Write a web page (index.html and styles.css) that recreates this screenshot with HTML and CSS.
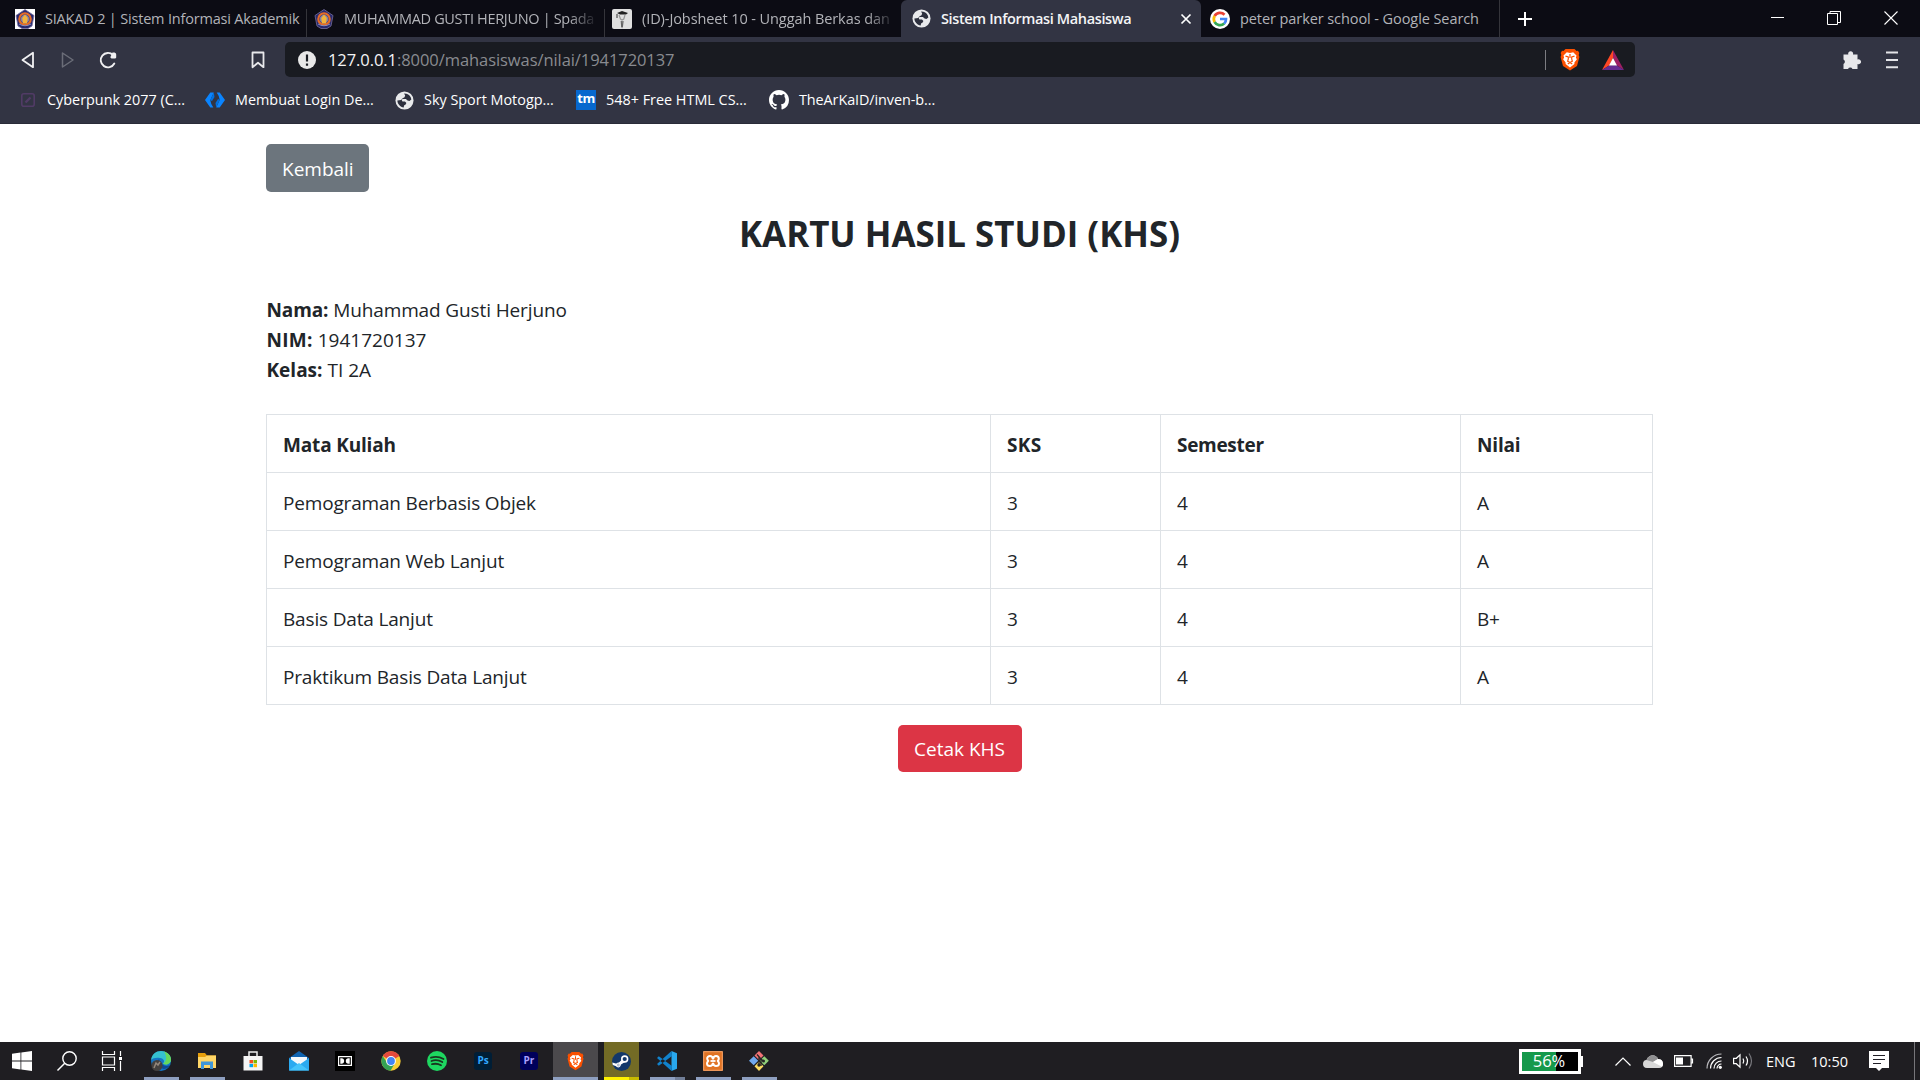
FILE: index.html
```html
<!DOCTYPE html>
<html lang="id">
<head>
<meta charset="utf-8">
<title>Sistem Informasi Mahasiswa</title>
<link rel="stylesheet" href="styles.css">
</head>
<body>
<svg class="defs" width="0" height="0" aria-hidden="true">
  <symbol id="globe" viewBox="0 0 20 20"><circle cx="10" cy="10" r="9.500" fill="#e9eaec"/><path d="M9.500 2.500 12 3c2.700.500 5 3 5.200 6l-2 1.500-2-.5-1.700-1.700-3.500.2C7 9 7 10.600 8 11h2.500l1.500 1.500-.8 1.800-1.700 1-.3 2C5.500 17 2.500 13.500 2.500 10l4-.5 1.500-2 2-.8.7-2z" fill="#2d303e"/></symbol>
  <symbol id="lion" viewBox="0 0 20 23"><path d="M5.500 1h9l2 2 1.500-.2 1.300 2.300-.6 2 .7 1.900-2.400 9L10 22.500 3 18 .6 9l.7-1.900-.6-2L2 2.800l1.500.2z" fill="#fb5000"/><path d="m10 5 3.200-.7 3.300 3.200-.6 2.200 1 1.600-2.500 3.200 0 1.500L10 19.500 5.600 16v-1.500L3.100 11.300l1-1.600-.6-2.200 3.300-3.200z" fill="#fff"/><path d="M5.500 8.200 8.300 9v2l-.6 2.200L10 14.500l2.300-1.300-.6-2.200V9l2.800-.8M10 6v4M7.800 16 10 14.500l2.200 1.500" fill="none" stroke="#fb5000" stroke-width="1.200"/></symbol>
  <symbol id="crest" viewBox="0 0 20 20"><path d="M10 .5 19 6.500 17 17l-4 2.500H7L3 17 1 6.500z" fill="#27296f" stroke="#776f9b" stroke-width=".8"/><circle cx="10" cy="10" r="5.700" fill="none" stroke="#e66b27" stroke-width="2.200"/><circle cx="10" cy="10" r="4.300" fill="#7f80a8"/><path d="M10 5.500 12.800 9 12 14.500H8L7.200 9z" fill="#f3b43b"/><path d="M4 15Q10 18.500 16 15" fill="none" stroke="#8c8eb7"/></symbol>
</svg>

<header class="browser">
  <div class="tabs">
    <div class="tab first"><span class="crest-box"><svg width="20" height="20"><use href="#crest"/></svg></span><span class="label t1">SIAKAD 2 | Sistem Informasi Akademik</span></div>
    <div class="tab"><svg width="20" height="20"><use href="#crest"/></svg><span class="label fade t2">MUHAMMAD GUSTI HERJUNO | Spada</span></div>
    <div class="tab plain"><svg width="20" height="20" viewBox="0 0 20 20"><rect width="20" height="20" rx="2" fill="#e0e0e0"/><path d="m5 4 5-2 6 2-2 1.500H8z" fill="#222"/><path d="m7 6 1.500 4L10 11l1.800-1L13 6M9 12l1 7 1.500-7" fill="none" stroke="#999" stroke-width="1.200"/><path d="M5 5v4M10 12v6" stroke="#333"/></svg><span class="label fade t3">(ID)-Jobsheet 10 - Unggah Berkas dan</span></div>
    <div class="tab active"><svg width="19" height="19"><use href="#globe"/></svg><span class="label t4">Sistem Informasi Mahasiswa</span><svg class="close" width="10" height="10" viewBox="0 0 10 10"><path d="m.5.500 9 9m0-9-9 9" stroke="#fff" stroke-width="1.700"/></svg></div>
    <div class="tab google"><svg width="20" height="20" viewBox="0 0 20 20"><circle cx="10" cy="10" r="10" fill="#fff"/><g fill="none" stroke-width="2.700"><path d="M14.500 5.700A6.200 6.200 0 0 0 4.600 7" stroke="#ea4335"/><path d="M4.600 7a6.200 6.200 0 0 0 0 6" stroke="#fbbc05"/><path d="M4.600 13a6.200 6.200 0 0 0 9.600 1.600" stroke="#34a853"/><path d="M14.200 14.600A6.200 6.200 0 0 0 16 10h-6" stroke="#4285f4"/></g></svg><span class="label t5">peter parker school - Google Search</span></div>
    <svg class="plus" width="14" height="14" viewBox="0 0 14 14"><path d="M7 0v14M0 7h14" stroke="#fff" stroke-width="2"/></svg>
    <div class="window-buttons">
      <svg width="14" height="14" viewBox="0 0 14 14"><path d="M1 6.500h13" stroke="#fff"/></svg>
      <svg width="14" height="14" viewBox="0 0 14 14"><path d="M.5 2.500h10v11H.5zM3 2.500v-2h10.500v11h-3" fill="none" stroke="#fff"/></svg>
      <svg width="14" height="14" viewBox="0 0 14 14"><path d="m.5.500 13 13m0-13-13 13" stroke="#fff" stroke-width="1.100"/></svg>
    </div>
  </div>

  <div class="nav">
    <svg class="back" width="14" height="18" viewBox="0 0 14 18"><path d="M12 1.800v14.400L1.500 9z" fill="none" stroke="#f0f0f2" stroke-width="1.800" stroke-linejoin="round"/></svg>
    <svg class="forward" width="14" height="18" viewBox="0 0 14 18"><path d="M1.500 2v14L12 9z" fill="none" stroke="#6b6d78" stroke-width="1.500" stroke-linejoin="round"/></svg>
    <svg class="reload" width="18" height="18" viewBox="0 0 18 18"><path d="M14 4A7.200 7.200 0 1 0 15.300 12.500" fill="none" stroke="#f0f0f2" stroke-width="1.900" stroke-linecap="round"/><path d="M13.500 1.500H15.500q1.700.3 1.700 2v3q-.2 1.200-1.700 1h-3q-1.500-.4-1-1.700z" fill="#f0f0f2"/></svg>
    <svg class="mark" width="14" height="18" viewBox="0 0 14 18"><path d="M1.500 1.500h11v14.700L7 11.700l-5.500 4.500z" fill="none" stroke="#e8e8eb" stroke-width="1.800" stroke-linejoin="round"/></svg>
    <div class="address">
      <svg width="18" height="18" viewBox="0 0 18 18"><circle cx="9" cy="9" r="9" fill="#e8e8e8"/><path d="M9 3.500v7M9 12.500v2.200" stroke="#1a1d23" stroke-width="2.200"/></svg>
      <span class="url"><b>127.0.0.1</b>:8000/mahasiswas/nilai/1941720137</span>
      <i class="bar"></i>
      <svg class="shield" width="20" height="23"><use href="#lion"/></svg>
      <svg class="bat" width="22" height="20" viewBox="0 0 22 20"><path d="M11 0 0 20l7.500-4.800L11 8z" fill="#ff4724"/><path d="m11 0 11 20-7.500-4.800L11 8z" fill="#9e1f63"/><path d="M0 20h22l-7.500-4.800h-7z" fill="#662d91"/><path d="m11 8 4 7.500H7z" fill="#fff"/></svg>
    </div>
    <svg class="puzzle" width="20" height="20" viewBox="0 0 20 20"><path d="M1.500 4.500h4.800a2.500 2.500 0 1 1 4.700 0h4.500v5a2.500 2.500 0 1 1 0 4.500v5h-5a2.500 2.500 0 0 0-4.500 0H1.500v-5a2.500 2.500 0 0 0 0-4.500z" fill="#e8e8eb"/></svg>
    <svg class="menu" width="12" height="18" viewBox="0 0 12 18"><path d="M0 1.500h12M0 9h12M0 16.300h12" stroke="#e4e4e8" stroke-width="1.900"/></svg>
  </div>

  <div class="bookmarks">
    <div class="bm b1"><svg width="14" height="14" viewBox="0 0 14 14"><rect x=".8" y=".8" width="12.400" height="12.400" rx="2" fill="none" stroke="#513b66" stroke-width="1.600"/><path d="m4.500 9.500 5-5" stroke="#513b66" stroke-width="2.400"/></svg><span>Cyberpunk 2077 (C...</span></div>
    <div class="bm b2"><svg width="20" height="16" viewBox="0 0 20 16"><path d="M8.800.500H5.300L0 8l5.300 7.500h3L6.300 12l-1-3.700 1.700-4z" fill="#0a84ff"/><path d="M8.800.500 9.500 5 7 9 5.300 8.300z" fill="#0070e0"/><path d="M11.200 15.500h3.500L20 8 14.700.500h-3l2 3.500 1 3.700-1.700 4z" fill="#0a84ff"/><path d="M11.200 15.500 10.500 11 13 7l1.700.7z" fill="#0070e0"/></svg><span>Membuat Login De...</span></div>
    <div class="bm b3"><svg width="19" height="19"><use href="#globe"/></svg><span>Sky Sport Motogp...</span></div>
    <div class="bm b4"><i class="tm">tm</i><span>548+ Free HTML CS...</span></div>
    <div class="bm b5"><svg width="20" height="20" viewBox="0 0 16 16"><path fill="#fff" d="M8 0C3.580 0 0 3.580 0 8c0 3.540 2.290 6.530 5.470 7.590.4.070.55-.17.55-.38 0-.19-.01-.82-.01-1.490-2.010.37-2.530-.49-2.690-.94-.09-.23-.48-.94-.82-1.130-.28-.15-.68-.52-.01-.53.63-.01 1.080.58 1.230.82.72 1.210 1.870.87 2.330.66.07-.52.28-.87.51-1.070-1.780-.2-3.640-.89-3.640-3.950 0-.87.31-1.590.82-2.150-.08-.2-.36-1.020.08-2.120 0 0 .67-.21 2.200.82a7.600 7.600 0 0 1 4 0c1.530-1.040 2.200-.82 2.200-.82.44 1.100.16 1.920.08 2.120.51.56.82 1.270.82 2.150 0 3.070-1.870 3.750-3.650 3.950.29.25.54.73.54 1.480 0 1.070-.01 1.930-.01 2.200 0 .21.15.46.55.38A8.010 8.010 0 0 0 16 8c0-4.420-3.580-8-8-8z"/></svg><span>TheArKaID/inven-b...</span></div>
  </div>
</header>

<main class="page">
  <a class="btn secondary">Kembali</a>
  <h2>KARTU HASIL STUDI (KHS)</h2>
  <div class="info">
    <p><b>Nama:</b> <span>Muhammad Gusti Herjuno</span></p>
    <p><b class="nim">NIM:</b> <span>1941720137</span></p>
    <p><b>Kelas:</b> <span>TI 2A</span></p>
  </div>
  <table>
    <colgroup><col class="c1"><col class="c2"><col class="c3"><col class="c4"></colgroup>
    <tr><th>Mata Kuliah</th><th>SKS</th><th>Semester</th><th>Nilai</th></tr>
    <tr><td>Pemograman Berbasis Objek</td><td>3</td><td>4</td><td>A</td></tr>
    <tr><td>Pemograman Web Lanjut</td><td>3</td><td>4</td><td>A</td></tr>
    <tr><td>Basis Data Lanjut</td><td>3</td><td>4</td><td>B+</td></tr>
    <tr><td>Praktikum Basis Data Lanjut</td><td>3</td><td>4</td><td>A</td></tr>
  </table>
  <div class="center"><a class="btn danger">Cetak KHS</a></div>
</main>

<footer class="taskbar">
  <div class="sys"><svg width="20" height="20" viewBox="0 0 20 20"><path d="m0 2.800 8.500-1.200v8H0zM9.300 1.500 20 0v9.600H9.300zM0 10.400h8.500v8L0 17.200zM9.300 10.400H20V20L9.300 18.500z" fill="#fff"/></svg></div>
  <div class="sys"><svg width="20" height="20" viewBox="0 0 20 20"><circle cx="12.500" cy="7.500" r="6.700" fill="none" stroke="#fff" stroke-width="1.400"/><path d="M7.700 12.300.5 19.500" stroke="#fff" stroke-width="1.500"/></svg></div>
  <div class="sys last"><svg width="20" height="20" viewBox="0 0 20 20"><path d="M.5 0v3.500h12V0M.5 20v-3.500h12V20M.5 6v8h12V6zM18.500 0v5M18.500 10v10" fill="none" stroke="#fff" stroke-width="1.200"/><path d="M17 6h3v3h-3z" fill="#fff"/></svg></div>
  <div class="app open"><svg width="20" height="20" viewBox="0 0 20 20"><circle cx="10" cy="10" r="10" fill="#1475c4"/><path d="M0 9C1 3 5 0 10 0c6 0 10 4.500 10 8.500 0 5-6 6-8 4 2-2 1-5-3-5.500C5 6.500 2 7 0 9z" fill="#35c1cf"/><path d="M13 .6C18 2.500 20 5.500 20 8.500c0 5-6 6-8 4 4-2 4-7 1-11.900z" fill="#67d85b"/><path d="M8 8c-3 4 0 9 5 10 3-.2 5-2 6-4-4 2-9 1-11-6z" fill="#0f4a93"/><circle cx="6" cy="14.500" r="5.500" fill="#44413f"/><path d="m3 17 2-5 2 2 2-3" stroke="#93877c" fill="none" stroke-width="1.500"/></svg></div>
  <div class="app open"><svg width="20" height="20" viewBox="0 0 20 20"><path d="M1 2h7l2 2.500h9V9H1z" fill="#e79f0c"/><path d="M1 6h7l2-1.500h9V17H1z" fill="#ffd667"/><path d="M4 18v-7.500h12V18h-3v-4H7v4z" fill="#3f96d8"/></svg></div>
  <div class="app"><svg width="20" height="20" viewBox="0 0 20 20"><path d="M6 6V1h8v5" fill="none" stroke="#eee" stroke-width="1.500"/><path d="M.5 5h19v14.500H.5z" fill="#f5f5f5"/><path d="M6.500 9H10v3.300H6.500z" fill="#f25022"/><path d="M10.500 9H14v3.300h-3.500z" fill="#7fba00"/><path d="M6.500 12.900H10v3.300H6.500z" fill="#00a4ef"/><path d="M10.500 12.900H14v3.300h-3.500z" fill="#ffb900"/></svg></div>
  <div class="app"><svg width="20" height="20" viewBox="0 0 20 20"><path d="M0 7 10 0l10 7v5H0z" fill="#0f63b0"/><path d="M2 6h16v8H2z" fill="#f4f8fb"/><path d="m0 7 10 7 10-7v12.500H0z" fill="#2baaf0"/><path d="M0 19.500 10 12l10 7.500z" fill="#45c4fb"/></svg></div>
  <div class="app"><svg width="20" height="20" viewBox="0 0 20 20"><path d="M0 0h20v20H0z" fill="#000"/><path d="M3.600 5.600h12.800v8.800H3.600z" fill="none" stroke="#fff" stroke-width="1.200"/><path d="M5.300 7.200h1.200c3.600 0 3.600 5.600 0 5.600H5.300zM14.700 7.200h-1.200c-3.600 0-3.600 5.600 0 5.600h1.200z" fill="#fff"/></svg></div>
  <div class="app"><svg width="20" height="20" viewBox="0 0 20 20"><circle cx="10" cy="10" r="9.700" fill="#f9cd33"/><path d="M10 10 1.800 5A9.700 9.700 0 0 1 18.400 5z" fill="#e34a3d"/><path d="M1.700 5A9.700 9.700 0 0 0 9.500 19.700L14 12l-7 1z" fill="#34a354"/><circle cx="10" cy="10" r="4.900" fill="#fff"/><circle cx="10" cy="10" r="3.900" fill="#4285f4"/></svg></div>
  <div class="app"><svg width="20" height="20" viewBox="0 0 20 20"><circle cx="10" cy="10" r="10" fill="#1ed760"/><path d="M4 6.700Q10.500 4.500 16.500 8M4.500 10Q10 8 15.300 11M5 13.200q5-1.300 9 1" fill="none" stroke="#19351f" stroke-width="1.800" stroke-linecap="round"/></svg></div>
  <div class="app"><i class="adobe ps">Ps</i></div>
  <div class="app"><i class="adobe pr">Pr</i></div>
  <div class="app open current"><svg width="17" height="20"><use href="#lion"/></svg></div>
  <div class="app open alert"><svg width="19" height="19" viewBox="0 0 19 19"><circle cx="9.500" cy="9.500" r="9.500" fill="#13386a"/><path d="m.3 10.500 5.200 1.500 5-5 2.800 2.800-5 3.200-2.800 1.800L.8 13z" fill="#fff"/><circle cx="12.700" cy="7" r="2.900" fill="#13386a" stroke="#fff" stroke-width="1.600"/><circle cx="6.300" cy="13" r="2" fill="#b8c2d2" stroke="#fff"/></svg></div>
  <div class="app open split"><svg width="20" height="20" viewBox="0 0 20 20"><path d="m14.500 0 5.500 2.300v15.400L14.500 20z" fill="#29a8ee"/><path d="M14.500 0 0 13l1.800 1.700L15 5zM14.500 20 0 7l1.800-1.700L15 15z" fill="#1182cc"/></svg></div>
  <div class="app open"><svg width="20" height="20" viewBox="0 0 20 20"><rect width="20" height="20" rx="1.500" fill="#e07324"/><rect x=".7" y=".7" width="18.600" height="18.600" fill="none" stroke="#f0a168"/><path d="M10 8.200C9.500 5.500 8.500 5 7 5S4 6 4.200 7.700 5.200 9.500 5.200 10 4 10.800 4 12.500 5.500 15 7 15s2.500-.7 3-3c.5 2.300 1.500 3 3 3s3-.8 3-2.500-1.200-2-1.200-2.500 1-.7 1-2.300S14.500 5 13 5s-2.500.5-3 3.200z" fill="none" stroke="#fff" stroke-width="2"/><path d="M7.500 10h5" stroke="#fff" stroke-width="1.800"/></svg></div>
  <div class="app open"><svg width="20" height="20" viewBox="0 0 20 20"><path d="m10 0 4.500 4.500L10 9 5.500 4.500z" fill="#f17276"/><path d="m4.700 5.300 4.500 4.500-4.500 4.500L0 9.800z" fill="#70a8ee"/><path d="m15.300 5.300 4.500 4.500-4.500 4.500-4.500-4.500z" fill="#91d07a"/><path d="m10 10.800 4.500 4.500L10 20l-4.500-4.700z" fill="#fcdc62"/><path d="M8 3.500 12 8v7M10 6v9M12 8l3 2.500" fill="none" stroke="#252525" stroke-width="1.300"/><circle cx="10" cy="14" r="1.700" fill="#252525"/><circle cx="14.500" cy="10" r="1.500" fill="#252525"/></svg></div>

  <div class="tray">
    <div class="battery"><span>56%</span></div>
    <svg class="chev" width="16" height="9" viewBox="0 0 16 9"><path d="m.5 8.500 7.500-7.500 7.500 7.500" fill="none" stroke="#fff" stroke-width="1.200"/></svg>
    <svg class="cloud" width="20" height="13" viewBox="0 0 20 13"><path d="M3.500 5C6-1 13-1 15 4c4 0 5 3 5 5s-1 4-4 4H4C1 13 0 11 0 9s1-4 3.500-4z" fill="#d8d8d8"/><path d="M3.500 5C6-1 13-1 15 4l-5 3z" fill="#909092"/><path d="m10 7 5-3c4 0 5 3 5 5 0 1-.3 2-1 2.700z" fill="#fff"/></svg>
    <svg class="cell" width="19" height="12" viewBox="0 0 19 12"><path d="M.6.600h16.500v10.700H.6zM17.500 4h1v4h-1" fill="none" stroke="#fff" stroke-width="1.200"/><path d="M2 2.500h7v7H2z" fill="#fff"/></svg>
    <svg class="wifi" width="16" height="16" viewBox="0 0 16 16"><g fill="none" stroke="#b9b9bd" stroke-width="1.200"><path d="M1 15.500A14.500 14.500 0 0 1 15.500 1"/><path d="M4.500 15.500a11 11 0 0 1 11-11" stroke="#fff"/><path d="M8 15.500A7.500 7.500 0 0 1 15.500 8" stroke="#fff"/><path d="M11 15.500a4.500 4.500 0 0 1 4.500-4.500" stroke="#fff"/></g><circle cx="14.300" cy="14.300" r="1.600" fill="#fff"/></svg>
    <svg class="sound" width="20" height="18" viewBox="0 0 20 18"><path d="M.6 6.300h2.700L7 2.800v12.400l-3.700-3.500H.6z" fill="none" stroke="#fff" stroke-width="1.200"/><path d="M10 6.500q1.500 2.500 0 5M13 4.500q3 4.500 0 9" fill="none" stroke="#fff" stroke-width="1.200"/><path d="M16 1.500q5 7.500 0 15" fill="none" stroke="#77777c" stroke-width="1.200"/></svg>
    <span class="eng">ENG</span>
    <span class="clock">10:50</span>
    <svg class="note" width="20" height="20" viewBox="0 0 20 20"><path d="M0 0h20v17h-7l-3 3-3-3H0z" fill="#fff"/><path d="M4 4.500h12M4 8.500h12M4 12.500h8" stroke="#211f27" stroke-width="1.200"/></svg>
    <i class="peek"></i>
  </div>
</footer>
</body>
</html>
```
FILE: styles.css
```css
* { box-sizing: border-box; }
body {
  margin: 0;
  width: 1920px;
  height: 1080px;
  overflow: hidden;
  display: flex;
  flex-direction: column;
  background: #fff;
  color: #212529;
  font-family: "Open Sans", "Noto Sans", sans-serif;
}
svg { display: block; flex: none; overflow: visible; }
i { font-style: normal; flex: none; }
.defs { display: none; }

/* browser chrome */
.browser { height: 124px; background: #323443; border-bottom: 1px solid #292b38; flex: none; }
.tabs { display: flex; height: 37px; background: #0c0c14; }
.tab {
  display: flex; align-items: center; flex: none;
  width: 298px; height: 37px; padding-left: 9px;
  color: #b2b3b8; font-size: 14.500px;
}
.tab.first { width: 305px; padding-left: 15px; }
.tab + .tab:not(.active):not(.google) { box-shadow: inset 1px 9px 0 #0c0c14, inset 2px 0 0 #35353b; }
.crest-box { background: #fff; width: 20px; height: 20px; flex: none; }
.label { margin-left: 10px; white-space: nowrap; }
.fade { -webkit-mask-image: linear-gradient(90deg, #000 225px, transparent 254px); mask-image: linear-gradient(90deg, #000 225px, transparent 254px); }
.t1 { letter-spacing: -.19px; }
.t2 { letter-spacing: -.32px; }
.t3 { letter-spacing: -.08px; }
.t4 { letter-spacing: -.36px; font-weight: 600; }
.t5 { letter-spacing: -.08px; }
.tab.active { width: 300px; padding-left: 11px; background: #323443; color: #f4f4f6; border-radius: 6px 6px 0 0; }
.close { margin-left: auto; margin-right: 10px; }
.tab.google { width: 299px; border-right: 1px solid #35353b; }
.plus { margin: 12px 0 0 18px; }
.window-buttons { display: flex; gap: 43px; margin: 11px 22px 0 auto; }
.nav { display: flex; align-items: center; height: 45px; padding-left: 21px; }
.forward { margin-left: 26px; }
.reload { margin-left: 24px; }
.mark { margin-left: 134px; }
.address {
  display: flex; align-items: center; width: 1350px; height: 35px;
  margin-left: 20px; padding-left: 13px; border-radius: 5px; background: #191b21;
}
.url { margin-left: 12px; color: #898b90; font-size: 16.500px; letter-spacing: -.07px; white-space: nowrap; }
.url b { color: #f4f4f5; font-weight: 400; }
.bar { width: 1px; height: 20px; margin-left: auto; background: #7c7d82; }
.shield { margin-left: 14px; }
.bat { margin: 0 11px 0 22px; }
.puzzle { margin-left: 207px; }
.menu { margin-left: 24px; }
.bookmarks { display: flex; align-items: center; height: 36px; padding-left: 21px; color: #fff; font-size: 14.400px; }
.bm { display: flex; align-items: center; white-space: nowrap; }
.bm span { margin: -2px 0 0 10px; }
.b1 { width: 184px; }
.b1 span { margin-left: 12px; }
.b2 { width: 190px; }
.b3 { width: 181px; }
.b4 { width: 193px; }
.b5 span { letter-spacing: -.08px; }
.tm { width: 20px; height: 20px; background: #0768ce; font-weight: 700; font-size: 13px; line-height: 17px; text-align: center; letter-spacing: -.5px; }

/* page content */
.page { flex: 1; width: 1388px; margin-left: 266px; padding-top: 20px; font-size: 19px; line-height: 30px; }
.btn { display: block; width: max-content; height: 48px; border-radius: 5px; color: #fff; white-space: nowrap; }
.secondary { width: 103px; padding: 10px 0 0 16px; background: #6c757d; }
.danger { width: 124px; height: 47px; padding: 9px 0 0 16px; background: #dc3545; }
h2 { margin: 19px 0 0; height: 45px; line-height: 45px; text-align: center; font-size: 34.900px; font-weight: 700; width: 1387px; white-space: nowrap; }
.info { margin-top: 39px; padding-left: .5px; }
.info p { margin: 0; height: 30px; white-space: nowrap; }
.info p:first-child { letter-spacing: -.12px; }
.info .nim { letter-spacing: .3px; }
table { width: 1387px; margin-top: 29px; border-collapse: collapse; table-layout: fixed; }
.c1 { width: 724px; }
.c2 { width: 170px; }
.c3 { width: 300px; }
.c4 { width: 192px; }
th, td { height: 58px; padding: 3px 15px 0 16px; border: 1px solid #dee2e6; text-align: left; line-height: 30px; letter-spacing: -.17px; }
th:nth-child(2) { letter-spacing: .3px; }
th:nth-child(3) { letter-spacing: -.3px; }
.center { display: flex; justify-content: center; width: 1388px; padding-top: 20px; }

/* taskbar */
.taskbar { flex: none; display: flex; height: 38px; background: #1f1e22; color: #fff; }
.sys { width: 45px; padding-right: 1px; display: flex; align-items: center; justify-content: center; }
.sys.last { margin-right: 3px; }
.app { width: 46px; display: flex; align-items: center; justify-content: center; }
.app.open { background: linear-gradient(#8e9fc0, #8e9fc0) 6px 35px / 35px 3px no-repeat; }
.app.current { background: linear-gradient(#8e9fc0, #8e9fc0) 1px 35px / 45px 3px no-repeat, linear-gradient(#4b494c, #4b494c) 1px 0 / 45px 38px no-repeat; }
.app.alert { background: linear-gradient(90deg, #fff200 25px, #c6b900 25px) 6px 35px / 35px 3px no-repeat, linear-gradient(#736b25, #736b25) 6px 0 / 35px 38px no-repeat; }
.app.split { background: linear-gradient(90deg, #8e9fc0 25px, #717e97 25px) 6px 35px / 35px 3px no-repeat; }
.adobe { width: 18px; height: 18px; border-radius: 3px; font-size: 10px; font-weight: 700; line-height: 17px; text-align: center; }
.ps { background: #001e36; color: #31a8ff; }
.pr { background: #00005b; color: #a9a0ff; }
.tray { display: flex; align-items: center; margin-left: auto; width: 401px; height: 38px; font-size: 14.500px; }
.battery {
  width: 62px; height: 25px; border: 3px solid #fff; font-size: 16.500px; line-height: 18px; text-align: center; padding-right: 2px;
  background: linear-gradient(90deg, #15994b 34px, #000 34px); position: relative;
}
.battery::after { content: ""; position: absolute; right: -5px; top: 4px; width: 2px; height: 11px; background: #fff; }
.chev { margin-left: 34px; }
.cloud { margin-left: 12px; }
.cell { margin-left: 11px; }
.wifi { margin-left: 13px; }
.sound { margin-left: 11px; }
.eng { margin-left: 13px; width: 45px; }
.clock { width: 58px; }
.peek { margin-left: 25px; width: 1px; height: 38px; background: #77767a; }
```
